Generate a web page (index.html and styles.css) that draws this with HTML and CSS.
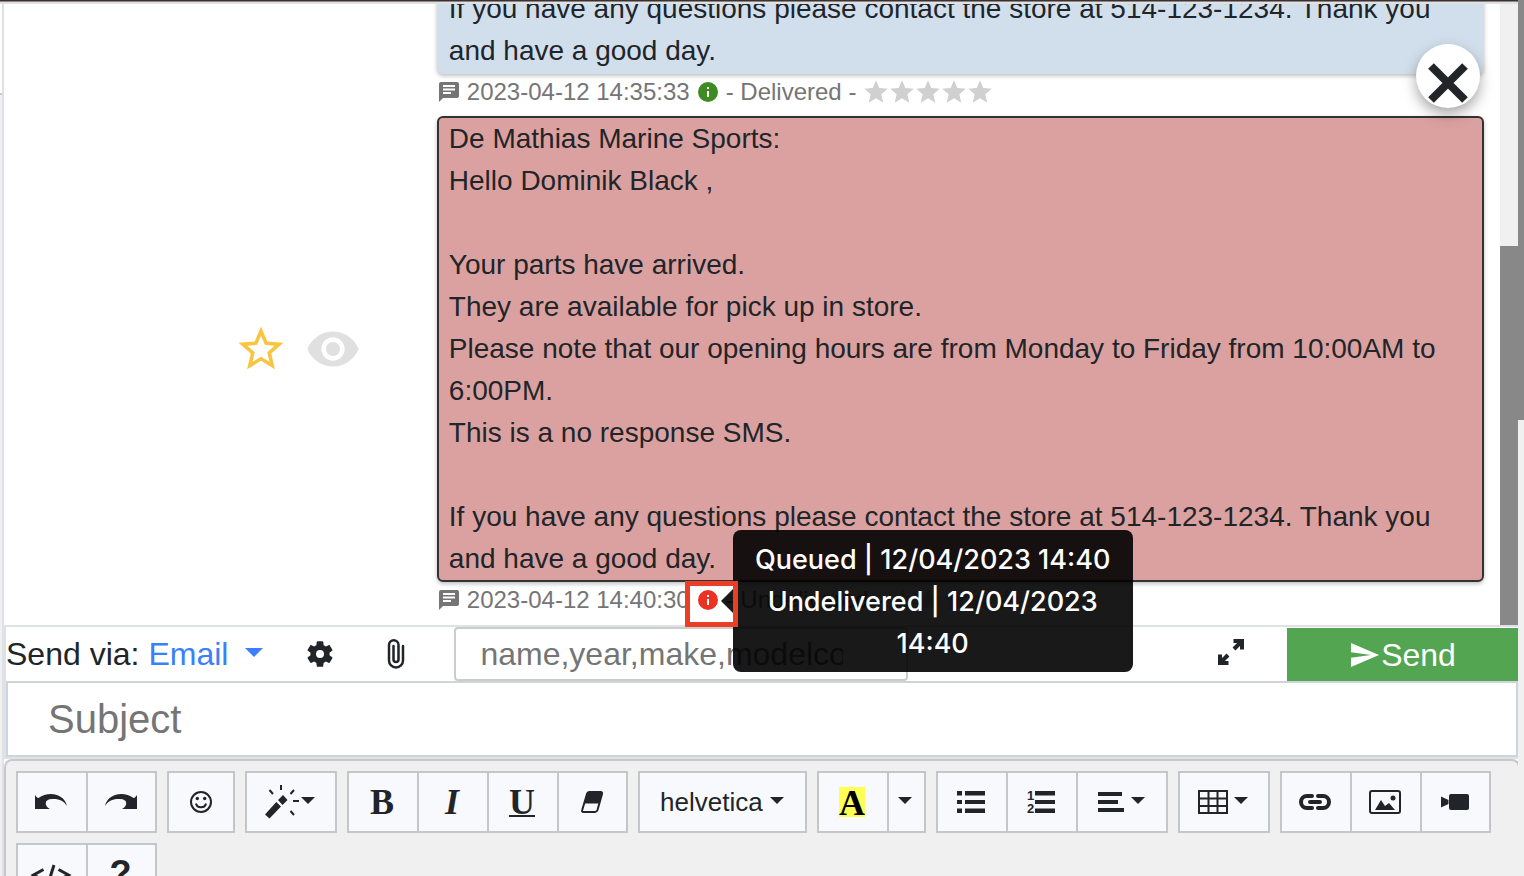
FILE: index.html
```html
<!DOCTYPE html>
<html lang="en">
<head>
<meta charset="utf-8">
<title>Messages</title>
<meta name="viewport" content="width=device-width, initial-scale=1">
<link rel="stylesheet" href="styles.css">
</head>
<body>
<svg class="sprite" aria-hidden="true">
  <symbol id="sms" viewBox="0 0 24 24"><path fill-rule="evenodd" d="M20 2H4C2.900 2 2 2.900 2 4V22L6 18H20C21.100 18 22 17.100 22 16V4C22 2.900 21.100 2 20 2ZM6 5H18V7H6ZM14 14H6V12H14ZM18 10.500H6V8.500H18Z"/></symbol>
  <symbol id="info" viewBox="0 0 24 24"><path fill-rule="evenodd" d="M12 2a10 10 0 1 0 0 20a10 10 0 0 0 0-20ZM13 17H11V11H13ZM13 9H11V7H13Z"/></symbol>
  <symbol id="star" viewBox="1 1 22 22"><path d="M12 17.270 18.180 21l-1.640-7.030L22 9.240l-7.190-.610L12 2 9.190 8.630 2 9.240l5.460 4.730L5.820 21z"/></symbol>
  <symbol id="rating" viewBox="0 0 120 24"><use href="#star" width="24" height="24"/><use href="#star" x="24" width="24" height="24"/><use href="#star" x="48" width="24" height="24"/><use href="#star" x="72" width="24" height="24"/><use href="#star" x="96" width="24" height="24"/></symbol>
  <symbol id="caret" viewBox="0 0 14 7"><path d="M0 0H14L7 7Z"/></symbol>
</svg>
<div class="page">
  <div class="rail"></div>
  <main class="panel">
    <div class="topbar"></div>
    <section class="chat">
      <div class="thread">
        <div class="row"><div class="bubble sent">If you have any questions please contact the store at 514-123-1234. Thank you and have a good day.</div></div>
        <div class="meta">
          <svg class="i24"><use href="#sms"/></svg><span>2023-04-12 14:35:33</span>
          <svg class="i24 ok"><use href="#info"/></svg><span>- Delivered -</span>
          <svg class="rating"><use href="#rating"/></svg>
        </div>
        <div class="row">
          <div class="actions">
            <button class="plain fav" aria-label="Favorite"><svg width="54" height="54" viewBox="0 0 24 24"><path d="M22 9.240l-7.190-.620L12 2 9.190 8.630 2 9.240l5.460 4.730L5.820 21 12 17.270 18.180 21l-1.630-7.030L22 9.240zM12 15.400l-3.760 2.270 1-4.280-3.320-2.880 4.380-.380L12 6.100l1.710 4.040 4.380.380-3.320 2.880 1 4.280L12 15.400z"/></svg></button>
            <button class="plain seen" aria-label="Mark as seen"><svg width="56" height="56" viewBox="0 0 24 24"><path d="M12 4.500C7 4.500 2.730 7.610 1 12c1.730 4.390 6 7.500 11 7.500s9.270-3.110 11-7.500c-1.730-4.390-6-7.500-11-7.500zM12 17c-2.760 0-5-2.240-5-5s2.240-5 5-5 5 2.240 5 5-2.240 5-5 5zm0-8c-1.660 0-3 1.340-3 3s1.340 3 3 3 3-1.340 3-3-1.340-3-3-3z"/></svg></button>
          </div>
          <div class="bubble failed">De Mathias Marine Sports:<br>Hello Dominik Black ,<br><br>Your parts have arrived.<br>They are available for pick up in store.<br>Please note that our opening hours are from Monday to Friday from 10:00AM to 6:00PM.<br>This is a no response SMS.<br><br>If you have any questions please contact the store at 514-123-1234. Thank you and have a good day.</div>
        </div>
        <div class="meta">
          <svg class="i24"><use href="#sms"/></svg><span>2023-04-12 14:40:30</span>
          <span class="status">
            <svg class="i24 error"><use href="#info"/></svg>
            <span class="tooltip" role="tooltip">Queued | 12/04/2023 14:40<br>Undelivered | 12/04/2023 14:40</span>
            <span class="marker"></span>
          </span>
          <span>- Undelivered -</span>
          <svg class="rating"><use href="#rating"/></svg>
        </div>
      </div>
      <div class="track"><div class="thumb"></div></div>
      <button class="close" aria-label="Close"><svg width="40" height="40" viewBox="0 0 40 40"><path d="M3 3 37 37M37 3 3 37"/></svg></button>
    </section>

    <form class="composer">
      <div class="sendbar">
        <label for="via">Send via:</label>
        <select id="via" class="via"><option>Email</option></select>
        <svg class="via-caret" viewBox="0 0 14 7" preserveAspectRatio="none"><path d="M0 0H14L7 7Z"/></svg>
        <button type="button" class="plain gear" aria-label="Settings"><svg width="32" height="32" viewBox="0 0 24 24"><path d="M19.140 12.940c.040-.300.060-.610.060-.940 0-.320-.020-.640-.070-.940l2.030-1.580c.180-.140.230-.410.120-.610l-1.920-3.320c-.120-.220-.370-.290-.590-.220l-2.390.960c-.500-.380-1.030-.700-1.620-.940l-.360-2.540c-.040-.240-.240-.410-.480-.410h-3.840c-.240 0-.430.170-.470.410l-.360 2.540c-.590.240-1.130.570-1.620.940l-2.390-.960c-.220-.080-.470 0-.590.220L2.740 8.870c-.120.210-.080.470.120.610l2.030 1.580c-.050.300-.090.630-.090.940s.020.640.070.940l-2.030 1.580c-.180.140-.230.410-.120.610l1.920 3.320c.120.220.370.290.590.220l2.390-.960c.500.380 1.030.700 1.620.940l.360 2.540c.050.240.240.410.480.410h3.840c.240 0 .440-.170.470-.410l.360-2.540c.590-.240 1.130-.560 1.620-.940l2.390.960c.220.080.470 0 .590-.220l1.920-3.320c.120-.220.070-.470-.120-.610l-2.010-1.580zM12 15a3 3 0 1 1 0-6 3 3 0 0 1 0 6z"/></svg></button>
        <button type="button" class="plain clip" aria-label="Attach file"><svg width="18" height="30" viewBox="0 0 18 30"><path d="M16 7V21.500A7 7 0 0 1 2 21.500V6A4.700 4.700 0 0 1 11.500 6V20.500A2.400 2.400 0 0 1 6.500 20.500V7"/></svg></button>
        <input class="vars" type="text" aria-label="Variables" placeholder="name,year,make,modelcolor">
        <button type="button" class="plain expand" aria-label="Expand"><svg width="26" height="26" viewBox="0 0 26 26"><path d="M15.500 2H24V10.500M24 2 16 10M2 15.500V24H10.500M2 24 10 16"/></svg></button>
        <button type="submit" class="send"><svg width="28" height="24" viewBox="0 0 28 24"><path d="M0 24 28 12 0 0V9.300L20 12 0 14.700Z"/></svg>Send</button>
      </div>
      <input class="subject" type="text" aria-label="Subject" placeholder="Subject">
    </form>

    <div class="editor">
      <div class="toolbar" role="toolbar">
        <div class="group">
          <button class="tool" aria-label="Undo"><svg width="32" height="16" viewBox="0 0 32 16"><path d="M0 1V15H15C9 12 9 5 17 5C24 4.500 29 7 32 12C29-1 13-3 3.500 4C2 4 1 2.500 0 1Z"/></svg></button>
          <button class="tool" aria-label="Redo"><svg width="32" height="16" viewBox="0 0 32 16"><path d="M32 1V15H17C23 12 23 5 15 5C8 4.500 3 7 0 12C3-1 19-3 28.500 4C30 4 31 2.500 32 1Z"/></svg></button>
        </div>
        <div class="group">
          <button class="tool single" aria-label="Emoji"><svg width="22" height="22" viewBox="0 0 22 22"><circle class="line" cx="11" cy="11" r="10"/><circle cx="7.300" cy="7.500" r="1.700"/><circle cx="14.700" cy="7.500" r="1.700"/><path class="line" d="M6 12.500C7 17.500 15 17.500 16 12.500"/></svg></button>
        </div>
        <div class="group">
          <button class="tool drop" aria-label="Style"><svg width="36" height="34" viewBox="0 0 36 34"><path d="M0 29.500 11.300 17 16 21.500 4.500 33.500ZM13 15 18 10 22.500 15 17.500 20Z"/><path class="line" d="M16 0V5M4.500 5 8 9M29 5 25.500 9M28 16H34M25.500 26 29 30"/></svg><svg class="caret"><use href="#caret"/></svg></button>
        </div>
        <div class="group">
          <button class="tool serif" aria-label="Bold">B</button>
          <button class="tool serif italic" aria-label="Italic">I</button>
          <button class="tool serif under" aria-label="Underline">U</button>
          <button class="tool" aria-label="Clear formatting"><svg width="22" height="22" viewBox="0 0 22 22"><path class="line" d="M8 1H19.500C21 1 21.300 2 21 3L16.500 19C16 20.500 15.500 21 14 21H2.500C1 21 .800 20 1.200 19L6 3C6.500 1.500 7 1 8 1Z"/><path d="M6 1H21V4L18.500 12.500H3Z"/></svg></button>
        </div>
        <div class="group font-picker">
          <select class="font" aria-label="Font family"><option>helvetica</option></select><svg class="caret"><use href="#caret"/></svg>
        </div>
        <div class="group">
          <button class="tool serif" aria-label="Text color"><span class="swatch">A</span></button>
          <button class="tool narrow" aria-label="More colors"><svg class="caret"><use href="#caret"/></svg></button>
        </div>
        <div class="group">
          <button class="tool" aria-label="Bulleted list"><svg width="28" height="22" viewBox="0 0 28 22"><path d="M0 0H5V4.500H0ZM8 0H28V4.500H8ZM0 9H5V13H0ZM8 9H28V13H8ZM0 17.500H5V22H0ZM8 17.500H28V22H8Z"/></svg></button>
          <button class="tool" aria-label="Numbered list"><svg width="28" height="24" viewBox="0 0 28 24"><path d="M8 1H28V5.500H8ZM8 10H28V14H8ZM8 18.500H28V23H8Z"/><text x="0" y="10">1</text><text x="0" y="23">2</text></svg></button>
          <button class="tool drop" aria-label="Paragraph"><svg width="27" height="20" viewBox="0 0 27 20"><path d="M0 0H24V4H0ZM0 8H20V12H0ZM0 16H26V20H0Z"/></svg><svg class="caret apart"><use href="#caret"/></svg></button>
        </div>
        <div class="group">
          <button class="tool drop" aria-label="Table"><svg width="30" height="24" viewBox="0 0 30 24"><path class="line" d="M1 1H29V23H1ZM10.500 1V23M19.500 1V23M1 8.500H29M1 16H29"/></svg><svg class="caret apart"><use href="#caret"/></svg></button>
        </div>
        <div class="group">
          <button class="tool" aria-label="Link"><svg width="32" height="16" viewBox="0 0 32 16"><path class="thick" d="M13 2H8A6 6 0 0 0 8 14H13M19 2H24A6 6 0 0 1 24 14H19M11 8H21"/></svg></button>
          <button class="tool" aria-label="Picture"><svg width="32" height="24" viewBox="0 0 32 24"><rect class="line" x="1" y="1" width="30" height="22" rx="2"/><circle cx="24" cy="8" r="2.500"/><path d="M6 20 12 10 16 16 20 13 26 20Z"/></svg></button>
          <button class="tool" aria-label="Video"><svg width="28" height="16" viewBox="0 0 28 16"><path d="M0 2.500 7.500 6V10L0 13.500Z"/><rect x="8" width="20" height="16" rx="2"/></svg></button>
        </div>
        <div class="group">
          <button class="tool" aria-label="Code view"><svg width="38" height="20" viewBox="0 0 38 20"><path class="thin" d="M11.500 5.500 1.500 11 11.500 16.500M26.500 5.500 36.500 11 26.500 16.500M22 1 16 20"/></svg></button>
          <button class="tool help" aria-label="Help">?</button>
        </div>
      </div>
    </div>
  </main>
  <div class="gutter"></div>
</div>
</body>
</html>
```

FILE: styles.css
```css
* { box-sizing: border-box; }

body {
  margin: 0;
  overflow: hidden;
  background: #fff;
  color: #212529;
  font-family: "Liberation Sans", Arial, sans-serif;
  font-size: 28px;
  line-height: 42px;
}

button, input, select {
  margin: 0;
  padding: 0;
  border: 0;
  border-radius: 0;
  color: inherit;
  font: inherit;
}

svg { flex: none; overflow: visible; fill: currentColor; }
.sprite { position: absolute; width: 0; height: 0; }
.plain { display: flex; align-items: center; justify-content: center; background: none; }

.page { display: flex; height: 100vh; }
.rail {
  flex: none;
  width: 4px;
  border-right: 2px solid #dee2e6;
  background: linear-gradient(#fff 93px, #c8c8c8 93px, #c8c8c8 95px, #f0f0f0 95px);
}
.gutter {
  position: relative;
  flex: none;
  width: 6px;
  background: linear-gradient(#888 48%, #f0f0f0 48%);
}
.panel { display: flex; flex: 1; flex-direction: column; min-width: 0; }

.topbar {
  position: relative;
  z-index: 2;
  flex: none;
  height: 4px;
  margin-left: -4px;
  background: linear-gradient(#3a312e 1px, #8c8583 1px, #8c8583 2px, #dee2e6 2px);
}

/* Conversation */
.chat { position: relative; z-index: 1; display: flex; flex: none; height: calc(100vh - 255px); }
.thread { display: flex; flex: 1; flex-direction: column; justify-content: flex-end; padding-bottom: 1px; }
.row { display: flex; align-items: center; justify-content: flex-end; }
.bubble {
  flex: none;
  width: 70%;
  margin-right: 16px;
  padding: 0 10px;
  border: 2px solid;
  border-radius: 6px;
  box-shadow: 0 2px 4px rgba(0, 0, 0, .25);
}
.sent { border-color: #d1dfec; background: #d1dfec; }
.failed { border-color: #333; background: #dba1a0; }

.actions { display: flex; align-items: center; gap: 17px; margin-right: 76px; }
.fav { color: #f9c440; }
.seen { color: #e0e0e0; }

.meta {
  display: flex;
  align-items: center;
  align-self: flex-end;
  gap: 6px;
  width: 70%;
  height: 36px;
  margin: 0 16px 6px 0;
  color: #757575;
  font-size: 24px;
  line-height: 36px;
  white-space: nowrap;
}
.i24 { display: block; width: 24px; height: 24px; }
.rating { width: 132px; height: 26px; color: #d0d0d0; }
.ok { color: #3d8b22; }
.error { color: #ea3323; }

.status { position: relative; }
.tooltip {
  position: absolute;
  top: -58px;
  left: 37px;
  width: 400px;
  padding: 9px 16px 7px;
  border-radius: 8px;
  background: rgba(0, 0, 0, .9);
  color: #fff;
  font-family: Inter, sans-serif;
  font-size: 27px;
  font-weight: 500;
  line-height: 42px;
  text-align: center;
  white-space: normal;
}
.tooltip::before {
  content: "";
  position: absolute;
  top: 50%;
  right: 100%;
  transform: translateY(-50%);
  border: 12px solid transparent;
  border-left: 0;
  border-right-color: rgba(0, 0, 0, .9);
}
.marker {
  position: absolute;
  top: -7px;
  left: -11px;
  width: 53px;
  height: 46px;
  border: 5px solid #ea3f26;
}

.track { display: flex; flex: none; flex-direction: column; justify-content: flex-end; width: 18px; background: #f0f0f0; }
.thumb { height: 61%; background: #888; }

.close {
  position: absolute;
  top: 40px;
  right: 38px;
  display: flex;
  align-items: flex-end;
  justify-content: center;
  width: 64px;
  height: 64px;
  padding-bottom: 5px;
  border-radius: 50%;
  background: #fff;
  box-shadow: 0 6px 14px rgba(0, 0, 0, .35);
}
.close path { fill: none; stroke: currentColor; stroke-width: 8; }

/* Composer */
.composer { flex: none; border: 2px solid #dee2e6; border-right: 0; font-size: 32px; }
.sendbar { display: flex; align-items: center; height: 54px; }
.sendbar label { margin-right: 9px; white-space: nowrap; }
.via { appearance: none; background: none; color: #3a7ffb; }
.via-caret { width: 18px; height: 9px; margin: 0 27px 4px 16px; color: #3a7ffb; }
.gear { width: 59px; }
.clip { width: 94px; margin-right: 11px; }
.clip path { fill: none; stroke: currentColor; stroke-width: 2.500; stroke-linecap: round; }
.vars { width: 30%; height: 54px; padding: 0 63px 0 24px; border: 2px solid #ccc; border-radius: 4px; }
.expand { margin: 0 43px 4px auto; }
.expand path { fill: none; stroke: currentColor; stroke-width: 4; }
.send {
  display: flex;
  align-items: center;
  align-self: flex-end;
  justify-content: center;
  gap: 2px;
  width: 231px;
  height: 53px;
  padding-left: 2px;
  background: #53a551;
  color: #fff;
}
.subject {
  display: block;
  width: 100%;
  height: 76px;
  padding: 0 40px;
  border: 2px solid #ced4da;
  font-size: 40px;
}
::placeholder { color: #757575; opacity: 1; }

/* Rich text editor */
.editor {
  flex: 1;
  min-height: 0;
  margin-right: -2px;
  overflow: hidden;
  border: 2px solid #c8c8c8;
  border-bottom: 0;
  border-radius: 8px 8px 0 0;
  background: #f0f0f0;
}
.toolbar { display: flex; flex-wrap: wrap; gap: 10px; padding: 10px; }
.group { display: flex; height: 62px; }
.tool {
  display: flex;
  align-items: center;
  justify-content: center;
  width: 70px;
  padding-right: 2px;
  border: 2px solid #c5c6c8;
  border-right-width: 0;
  background: #f8f9fc;
}
.tool:last-child { width: 71px; border-right-width: 2px; }
.tool.single { width: 68px; padding-right: 0; }
.tool.drop { width: 92px; }
.tool.narrow { width: 39px; padding-right: 4px; }
.line, .thick, .thin { fill: none; stroke: currentColor; stroke-width: 2; }
.thick { stroke-width: 4; stroke-linecap: round; }
.thin { stroke-width: 3; }
.caret { width: 14px; height: 7px; margin-bottom: 4px; }
.caret.apart { margin-left: 6px; }
.serif { font-family: "Liberation Serif", serif; font-size: 36px; font-weight: 700; }
.italic { font-style: italic; }
.under { text-decoration: underline; text-decoration-thickness: 2px; }
.swatch { display: block; height: 30px; background: #ffff54; color: #000; line-height: 32px; }
.tool text { font-size: 13px; font-weight: 700; }
.help { font-size: 36px; font-weight: 700; }
.font-picker { align-items: center; width: 169px; padding-left: 20px; border: 2px solid #c5c6c8; background: #f8f9fc; }
.font { margin-right: 7px; appearance: none; background: none; font-size: 26px; }
```
